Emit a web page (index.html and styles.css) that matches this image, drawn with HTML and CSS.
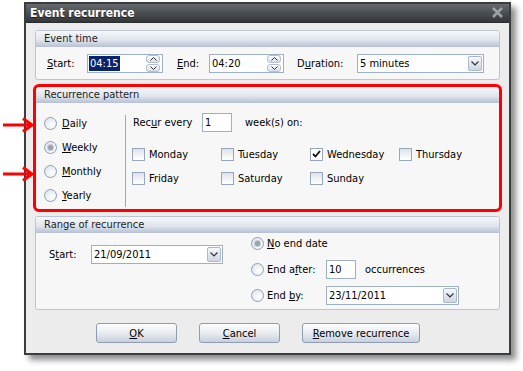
FILE: index.html
```html
<!DOCTYPE html>
<html lang="en">
<head>
<meta charset="UTF-8">
<title>Event recurrence</title>
<link rel="stylesheet" href="styles.css">
</head>
<body>
<div class="page">
  <div class="window">
    <div class="titlebar">
      <span class="title">Event recurrence</span>
      <svg class="close" width="13" height="11" viewBox="0 0 13 11"><path d="M2 1 L11 10 M11 1 L2 10" stroke="#9ba1a6" stroke-width="2.6"/></svg>
    </div>
    <div class="dialog">

      <div class="group">
        <div class="group-head">Event time</div>
        <div class="time-row">
          <span class="lbl w40"><u>S</u>tart:</span>
          <div class="field w76">
            <span class="selected">04:15</span>
            <span class="spin"><i><svg width="7" height="4" viewBox="0 0 7 4"><path d="M0.5 3.5 L3.5 0.5 L6.5 3.5" fill="none" stroke="#333"/></svg></i><i><svg width="7" height="4" viewBox="0 0 7 4"><path d="M0.5 0.5 L3.5 3.5 L6.5 0.5" fill="none" stroke="#333"/></svg></i></span>
          </div>
          <span class="lbl w32 ml14"><u>E</u>nd:</span>
          <div class="field w75">
            <span class="val">04:20</span>
            <span class="spin"><i><svg width="7" height="4" viewBox="0 0 7 4"><path d="M0.5 3.5 L3.5 0.5 L6.5 3.5" fill="none" stroke="#333"/></svg></i><i><svg width="7" height="4" viewBox="0 0 7 4"><path d="M0.5 0.5 L3.5 3.5 L6.5 0.5" fill="none" stroke="#333"/></svg></i></span>
          </div>
          <span class="lbl w60 ml13">D<u>u</u>ration:</span>
          <div class="field w127">
            <span class="val">5 minutes</span>
            <span class="drop"><svg width="8" height="5" viewBox="0 0 8 5"><path d="M0.5 0.5 L4 4 L7.5 0.5" fill="none" stroke="#333" stroke-width="1.2"/></svg></span>
          </div>
        </div>
      </div>

      <div class="group marked">
        <div class="group-head">Recurrence pattern</div>
        <div class="pattern">
          <div class="kinds">
            <div class="opt"><span class="radio"></span><span><u>D</u>aily</span></div>
            <div class="opt"><span class="radio on"></span><span><u>W</u>eekly</span></div>
            <div class="opt"><span class="radio"></span><span><u>M</u>onthly</span></div>
            <div class="opt"><span class="radio"></span><span><u>Y</u>early</span></div>
          </div>
          <div class="weekly">
            <div class="recur-row">
              <span class="w69">Rec<u>u</u>r every</span>
              <div class="field w30"><span class="val">1</span></div>
              <span class="ml13">week(s) on:</span>
            </div>
            <div class="days">
              <div class="day"><span class="check"></span>Monday</div>
              <div class="day"><span class="check"></span>Tuesday</div>
              <div class="day"><span class="check on"><svg width="9" height="8" viewBox="0 0 9 8"><path d="M1 4 L3.5 6.5 L8 1" fill="none" stroke="#111" stroke-width="1.8"/></svg></span>Wednesday</div>
              <div class="day"><span class="check"></span>Thursday</div>
              <div class="day"><span class="check"></span>Friday</div>
              <div class="day"><span class="check"></span>Saturday</div>
              <div class="day"><span class="check"></span>Sunday</div>
            </div>
          </div>
        </div>
      </div>

      <div class="group range">
        <div class="group-head">Range of recurrence</div>
        <div class="range-body">
          <div class="range-start">
            <span class="lbl w42">S<u>t</u>art:</span>
            <div class="field w132">
              <span class="val">21/09/2011</span>
              <span class="drop"><svg width="8" height="5" viewBox="0 0 8 5"><path d="M0.5 0.5 L4 4 L7.5 0.5" fill="none" stroke="#333" stroke-width="1.2"/></svg></span>
            </div>
          </div>
          <div class="range-end">
            <div class="end-row"><span class="radio on"></span><span><u>N</u>o end date</span></div>
            <div class="end-row">
              <span class="radio"></span><span class="w59">End a<u>f</u>ter:</span>
              <div class="field w30"><span class="val">10</span></div>
              <span class="ml9">occurrences</span>
            </div>
            <div class="end-row">
              <span class="radio"></span><span class="w59">End <u>b</u>y:</span>
              <div class="field w133">
                <span class="val">23/11/2011</span>
                <span class="drop"><svg width="8" height="5" viewBox="0 0 8 5"><path d="M0.5 0.5 L4 4 L7.5 0.5" fill="none" stroke="#333" stroke-width="1.2"/></svg></span>
              </div>
            </div>
          </div>
        </div>
      </div>

      <div class="buttons">
        <button class="btn w81"><u>O</u>K</button>
        <button class="btn w81"><u>C</u>ancel</button>
        <button class="btn w118"><u>R</u>emove recurrence</button>
      </div>
    </div>
  </div>

  <svg class="arrow a1" width="32" height="16" viewBox="0 0 32 16"><path d="M0 8 L29 8 M20 1.5 L29 8 L20 14.5" fill="none" stroke="#f00" stroke-width="3"/></svg>
  <svg class="arrow a2" width="32" height="16" viewBox="0 0 32 16"><path d="M0 8 L29 8 M20 1.5 L29 8 L20 14.5" fill="none" stroke="#f00" stroke-width="3"/></svg>
</div>
</body>
</html>
```

FILE: styles.css
```css
* {
  box-sizing: border-box;
}
body {
  margin: 0;
  background: #fff;
  font-family: "DejaVu Sans Condensed", "Liberation Sans", sans-serif;
  font-size: 11px;
  color: #000;
}
u {
  text-underline-offset: 1px;
}
.page {
  position: relative;
  width: 523px;
  height: 371px;
  padding: 2px 0 0 24px;
}
.window {
  width: 487px;
  border: 2px solid #3a3e41;
  background: #ececec;
  box-shadow: 5px 5px 6px rgba(0, 0, 0, 0.45);
}
.titlebar {
  height: 19px;
  display: flex;
  align-items: center;
  justify-content: space-between;
  padding: 0 5px 1px 4px;
  background: linear-gradient(#666a6e, #4a4e51 50%, #33373a);
  border-bottom: 1px solid #2a2d30;
}
.title {
  color: #fff;
  font-weight: bold;
  font-size: 12px;
  text-shadow: 0 1px 0 #1c1e20;
}
.dialog {
  padding: 7px 9px 10px 9px;
}

/* group boxes */
.group {
  border: 1px solid #bcc6d3;
  border-radius: 3px;
  background: #f7f7f7;
}
.group.marked {
  margin-top: 6px;
  outline: 3px solid #f00;
  outline-offset: -1px;
  border-radius: 4px;
}
.group.range {
  margin-top: 6px;
}
.group-head {
  height: 16px;
  line-height: 15px;
  padding-left: 8px;
  color: #1e1e1e;
  background: linear-gradient(#f5f7fa, #e1e6ee 55%, #b6c1d4);
  border-radius: 2px 2px 0 0;
}

/* inputs */
.field {
  height: 19px;
  border: 1px solid #9cb1c8;
  background: #fff;
  display: flex;
  align-items: center;
  justify-content: space-between;
  padding-left: 1px;
}
.val {
  padding-left: 1px;
}
.selected {
  background: #0a246a;
  color: #fff;
  padding: 1px 1px;
}
.spin {
  display: flex;
  flex-direction: column;
  gap: 1px;
  margin-right: 2px;
}
.spin i {
  width: 14px;
  height: 8px;
  border: 1px solid #b3bfce;
  border-radius: 3px;
  background: linear-gradient(#fdfdfe, #d8dfe9);
  display: flex;
  align-items: center;
  justify-content: center;
}
.drop {
  width: 14px;
  height: 15px;
  margin-right: 1px;
  border: 1px solid #a9b8cc;
  border-radius: 2px;
  background: linear-gradient(#f6f8fb, #cdd6e3);
  display: flex;
  align-items: center;
  justify-content: center;
}

/* event time */
.time-row {
  display: flex;
  align-items: center;
  padding: 7px 0 6px 11px;
}
.lbl {
  flex-shrink: 0;
}
.w30 { width: 30px; }
.w32 { width: 32px; }
.w40 { width: 40px; }
.w42 { width: 42px; }
.w59 { width: 59px; }
.w60 { width: 60px; }
.w69 { width: 69px; }
.w75 { width: 75px; }
.w76 { width: 76px; }
.w81 { width: 81px; }
.w118 { width: 118px; }
.w127 { width: 127px; }
.w132 { width: 132px; }
.w133 { width: 133px; }
.ml9 { margin-left: 9px; }
.ml13 { margin-left: 13px; }
.ml14 { margin-left: 14px; }

/* radios and checks */
.radio {
  width: 13px;
  height: 13px;
  flex-shrink: 0;
  border: 1px solid #8e9fb4;
  border-radius: 50%;
  background: radial-gradient(circle at 65% 65%, #ffffff, #e9edf2 60%, #d5dce6);
  display: flex;
  align-items: center;
  justify-content: center;
}
.radio.on::after {
  content: "";
  width: 5px;
  height: 5px;
  border-radius: 50%;
  background: #99a3b0;
  box-shadow: 0 0 0 1px #c2c9d3;
}
.check {
  width: 13px;
  height: 13px;
  flex-shrink: 0;
  margin-right: 4px;
  border: 1px solid #95a7bd;
  background: linear-gradient(#dde2ea, #f2f4f7 60%, #fff);
  display: flex;
  align-items: center;
  justify-content: center;
}
.check.on {
  background: #fff;
}

/* recurrence pattern */
.pattern {
  display: flex;
  height: 106px;
}
.kinds {
  position: relative;
  width: 90px;
  padding: 8px 0 0 8px;
}
.kinds::after {
  content: "";
  position: absolute;
  right: 0;
  top: 12px;
  bottom: 2px;
  width: 1px;
  background: #a3a7ab;
}
.opt {
  height: 24px;
  display: flex;
  align-items: center;
  gap: 5px;
}
.weekly {
  padding: 9px 0 0 6px;
}
.recur-row {
  display: flex;
  align-items: center;
  height: 20px;
  padding-left: 1px;
}
.days {
  display: grid;
  grid-template-columns: repeat(4, 89px);
  grid-auto-rows: 24px;
  margin-top: 10px;
}
.day {
  display: flex;
  align-items: center;
}

/* range */
.range-body {
  display: flex;
  padding: 0 0 4px 13px;
}
.range-start {
  display: flex;
  align-items: center;
  margin-top: 12px;
  align-self: flex-start;
}
.range-end {
  margin-left: 28px;
  display: flex;
  flex-direction: column;
  gap: 6px;
}
.end-row {
  height: 20px;
  display: flex;
  align-items: center;
}
.end-row .radio {
  margin-right: 3px;
}

/* buttons */
.buttons {
  display: flex;
  gap: 22px;
  padding: 13px 0 0 61px;
}
.btn {
  height: 20px;
  padding: 0;
  font: inherit;
  color: #000;
  border: 1px solid #8f9db1;
  border-radius: 3px;
  background: linear-gradient(#fdfdfe, #e8ecf1 50%, #c8d0dc);
}

/* annotation arrows */
.arrow {
  position: absolute;
  left: 3px;
}
.a1 {
  top: 117px;
}
.a2 {
  top: 166px;
}
```
